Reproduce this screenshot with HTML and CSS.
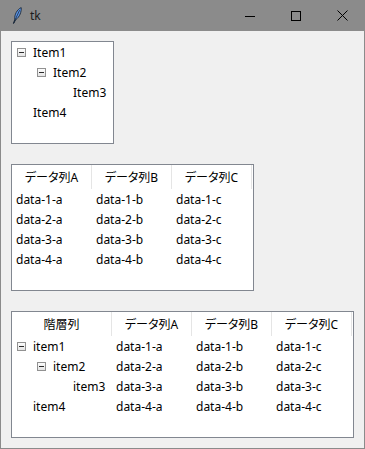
FILE: index.html
```html
<html lang="ja">
<head>
    <meta charset="UTF-8">
    <meta name="viewport" content="width=device-width, initial-scale=1.0"/>
    <title>tk</title>
    <link rel="stylesheet" href="styles.css">
</head>
<body>
<div class="window">
    <div class="titlebar">
        <svg class="app-icon" width="10" height="17" viewBox="0 0 10 17">
            <path d="M1.6 16.4 L2.8 12.2 C2.2 8 5 2.4 9.2 0.6 C9.6 4.4 7.8 10 3.8 12.6 Z" fill="#5b95e8" stroke="#1c2838" stroke-width="0.9"/>
            <path d="M1.4 16.6 L7.6 3.2" stroke="#1c2838" stroke-width="0.8" fill="none"/>
        </svg>
        <span class="title">tk</span>
        <div class="controls">
            <span class="ctl">
                <svg width="10" height="10" viewBox="0 0 10 10"><path d="M0 5.5 H10" stroke="#000" stroke-width="1"/></svg>
            </span>
            <span class="ctl">
                <svg width="10" height="10" viewBox="0 0 10 10"><rect x="0.5" y="0.5" width="9" height="9" fill="none" stroke="#000" stroke-width="1"/></svg>
            </span>
            <span class="ctl">
                <svg width="11" height="11" viewBox="0 0 11 11"><path d="M0.5 0.5 L10.5 10.5 M10.5 0.5 L0.5 10.5" stroke="#000" stroke-width="1"/></svg>
            </span>
        </div>
    </div>
    <div class="client">
        <div class="tree tree-plain">
            <div class="node"><span class="slot"><span class="toggle"></span></span>Item1</div>
            <div class="node lvl1"><span class="slot"><span class="toggle"></span></span>Item2</div>
            <div class="node lvl2"><span class="slot"></span>Item3</div>
            <div class="node"><span class="slot"></span>Item4</div>
        </div>

        <div class="tree table table-a">
            <div class="head">
                <div class="hcell">データ列A</div>
                <div class="hcell">データ列B</div>
                <div class="hcell">データ列C</div>
            </div>
            <div class="row"><div class="cell">data-1-a</div><div class="cell">data-1-b</div><div class="cell">data-1-c</div></div>
            <div class="row"><div class="cell">data-2-a</div><div class="cell">data-2-b</div><div class="cell">data-2-c</div></div>
            <div class="row"><div class="cell">data-3-a</div><div class="cell">data-3-b</div><div class="cell">data-3-c</div></div>
            <div class="row"><div class="cell">data-4-a</div><div class="cell">data-4-b</div><div class="cell">data-4-c</div></div>
        </div>

        <div class="tree table table-b">
            <div class="head">
                <div class="hcell wide">階層列</div>
                <div class="hcell">データ列A</div>
                <div class="hcell">データ列B</div>
                <div class="hcell">データ列C</div>
            </div>
            <div class="row">
                <div class="cell wide node"><span class="slot"><span class="toggle"></span></span>item1</div>
                <div class="cell">data-1-a</div><div class="cell">data-1-b</div><div class="cell">data-1-c</div>
            </div>
            <div class="row">
                <div class="cell wide node lvl1"><span class="slot"><span class="toggle"></span></span>item2</div>
                <div class="cell">data-2-a</div><div class="cell">data-2-b</div><div class="cell">data-2-c</div>
            </div>
            <div class="row">
                <div class="cell wide node lvl2"><span class="slot"></span>item3</div>
                <div class="cell">data-3-a</div><div class="cell">data-3-b</div><div class="cell">data-3-c</div>
            </div>
            <div class="row">
                <div class="cell wide node"><span class="slot"></span>item4</div>
                <div class="cell">data-4-a</div><div class="cell">data-4-b</div><div class="cell">data-4-c</div>
            </div>
        </div>
    </div>
</div>
</body>
</html>
```

FILE: styles.css
```css
body {
    margin: 0;
    font-family: "Noto Sans", "Noto Sans CJK JP", sans-serif;
    font-size: 12px;
    color: #000;
}
.window {
    width: 365px;
    height: 449px;
    display: flex;
    flex-direction: column;
    background-color: #8b8b8b;
}
.titlebar {
    height: 31px;
    flex: none;
    display: flex;
    align-items: center;
}
.app-icon {
    margin-left: 12px;
}
.title {
    margin-left: 8px;
    color: #1c1c1c;
    font-size: 12px;
}
.controls {
    margin-left: auto;
    display: flex;
    height: 31px;
}
.ctl {
    width: 46px;
    display: flex;
    justify-content: center;
    align-items: center;
}
.client {
    flex: 1;
    margin: 0 1px 1px 1px;
    background-color: #f0f0f0;
    padding: 10px;
    display: flex;
    flex-direction: column;
    align-items: flex-start;
    gap: 20px;
}
.tree {
    background-color: #fff;
    border: 1px solid #828790;
    padding: 0 1px 1px 0;
    box-sizing: border-box;
}
.tree-plain {
    width: 103px;
    height: 103px;
}
.table-a {
    width: 243px;
    height: 127px;
}
.table-b {
    width: 343px;
    height: 127px;
}
.node {
    display: flex;
    align-items: center;
    height: 20px;
    white-space: nowrap;
}
.node.lvl1 {
    padding-left: 20px;
}
.node.lvl2 {
    padding-left: 40px;
}
.slot {
    width: 21px;
    flex: none;
    display: flex;
    align-items: center;
    padding-left: 5px;
    box-sizing: border-box;
}
.toggle {
    width: 9px;
    height: 9px;
    box-sizing: border-box;
    border: 1px solid #919191;
    background: linear-gradient(#fdfdfd, #e4e4e4);
    display: flex;
    justify-content: center;
    align-items: center;
}
.toggle::before {
    content: "";
    width: 5px;
    height: 1px;
    background-color: #2a2a2a;
}
.head {
    display: flex;
    height: 24px;
}
.hcell {
    width: 80px;
    flex: none;
    box-sizing: border-box;
    border-right: 1px solid #e5e5e5;
    display: flex;
    justify-content: center;
    align-items: center;
    font-feature-settings: "palt";
}
.row {
    display: flex;
    height: 20px;
}
.cell {
    width: 80px;
    flex: none;
    box-sizing: border-box;
    padding-left: 4px;
    display: flex;
    align-items: center;
    white-space: nowrap;
}
.wide {
    width: 100px;
}
.cell.node {
    padding-left: 0;
}
.cell.node.lvl1 {
    padding-left: 20px;
}
.cell.node.lvl2 {
    padding-left: 40px;
}
```
